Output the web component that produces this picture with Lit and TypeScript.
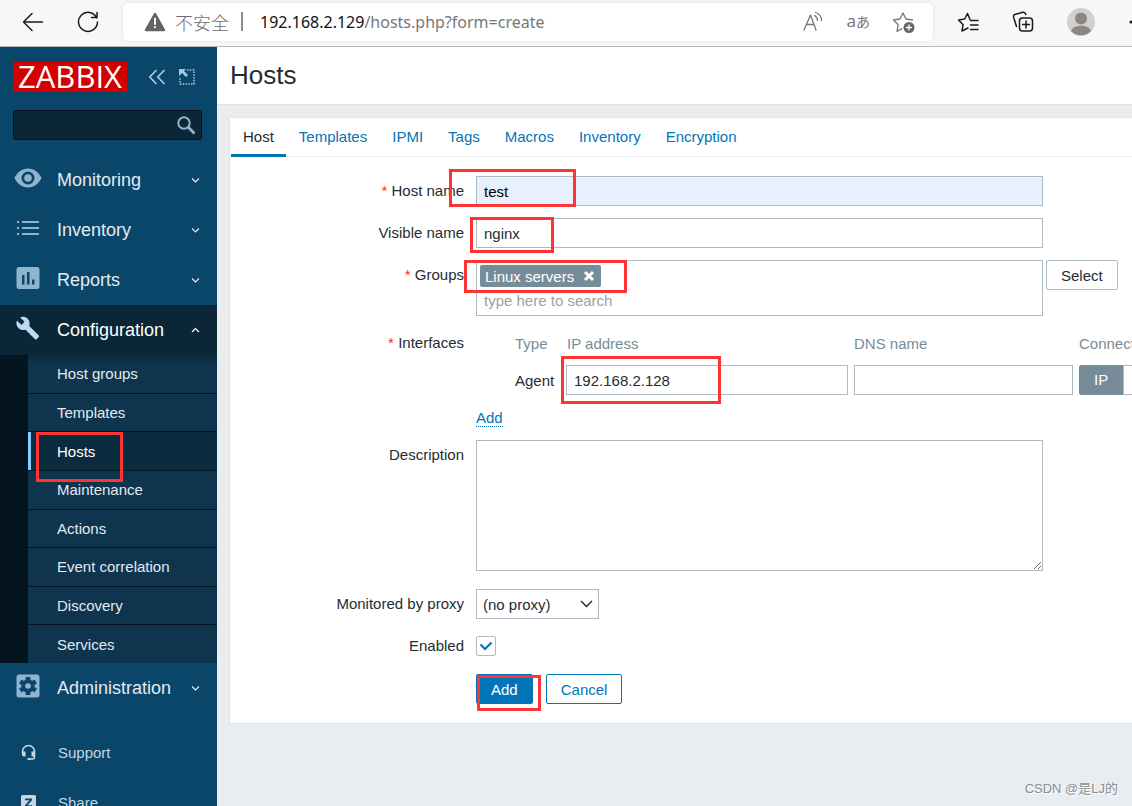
import { LitElement, html, css, svg, nothing, type TemplateResult } from "lit";
import { customElement, property, state } from "lit/decorators.js";
import { classMap } from "lit/directives/class-map.js";

/* ---------- browser toolbar ---------- */

@customElement("browser-bar")
class BrowserBar extends LitElement {
  static styles = css`
    :host {
      display: flex;
      align-items: center;
      box-sizing: border-box;
      height: 47px;
      padding: 0 0 3px 22px;
      background: #f7f7f7;
      border-bottom: 1px solid #b9b9b9;
      overflow: hidden;
      color: #1b1b1b;
    }
    button {
      display: flex;
      flex: none;
      padding: 0;
      border: 0;
      background: none;
      color: inherit;
    }
    svg {
      display: block;
      fill: none;
      stroke: currentColor;
      stroke-width: 1.5;
      stroke-linecap: round;
      stroke-linejoin: round;
    }
    .nav {
      display: flex;
      gap: 33px;
      margin-right: 24px;
    }
    .address {
      display: flex;
      flex: 1;
      align-items: center;
      height: 38px;
      padding: 0 17px 0 21px;
      box-sizing: border-box;
      background: #fff;
      border-radius: 5px;
      box-shadow: 0 0 4px #e2e2e2;
      color: #6c6c6c;
      white-space: nowrap;
    }
    .unsafe {
      margin-left: 9px;
      font: 18px/24px "Noto Sans CJK SC", sans-serif;
      font-weight: 300;
    }
    .divider {
      width: 2px;
      height: 19px;
      margin: 0 17px 0 12px;
      background: #8d8d8d;
    }
    .url {
      flex: 1;
      font: 16px/24px "Noto Sans", sans-serif;
      color: #777;
    }
    .origin {
      color: #111;
    }
    .tools {
      display: flex;
      align-items: center;
      gap: 22px;
      color: #777;
    }
    .translate {
      align-items: baseline;
      font: 17px/22px "Noto Sans", "Noto Sans CJK JP", sans-serif;
    }
    .kana {
      font-size: 14px;
    }
    .side {
      display: flex;
      flex: none;
      align-items: center;
      gap: 32px;
      width: 175px;
      margin-left: 24px;
    }
  `;

  render() {
    return html`
      <div class="nav">
        <button aria-label="Back">
          <svg width="22" height="22" viewBox="0 0 22 22"><path d="M10 2.5 1.5 11l8.500 8.500M1.500 11H20.500" /></svg>
        </button>
        <button aria-label="Reload">
          <svg width="22" height="22" viewBox="0 0 22 22"><path d="M19.700 7A9.500 9.500 0 1 0 20.500 11M14.500 6.500h5.500V1.500" /></svg>
        </button>
      </div>
      <div class="address">
        <svg width="22" height="20" viewBox="0 0 22 20">
          <path d="M11 2 20 18H2Z" fill="#636363" stroke="#636363" stroke-width="2.500" />
          <path d="M11 6.500v5.500M11 15v.3" stroke="#fff" stroke-width="2" />
        </svg>
        <span class="unsafe">不安全</span>
        <span class="divider"></span>
        <span class="url"><span class="origin">192.168.2.129</span>/hosts.php?form=create</span>
        <div class="tools">
          <button aria-label="Read aloud">
            <svg width="22" height="22" viewBox="0 0 22 22"><path d="M2 19 8.500 4 14 19M4.500 13.500h7.500M12.500 4.500c2 1 3 3 3 5M13.500 1.500c4 1.200 6 4.500 6 8" stroke-width="1.300" /></svg>
          </button>
          <button class="translate" aria-label="Translate">a<span class="kana">あ</span></button>
          <button aria-label="Add to favourites">
            <svg width="24" height="22" viewBox="0 0 24 22">
              <path d="m11 2 3 6 6.500 1M11 2 8 8 1.500 9l4.700 4.700L5 20.300l5-2.600" stroke-width="1.300" />
              <circle cx="17" cy="16.500" r="5.500" fill="#666" stroke="none" />
              <path d="M14.500 16.500h5M17 14v5" stroke="#fff" stroke-width="1.300" />
            </svg>
          </button>
        </div>
      </div>
      <div class="side">
        <button aria-label="Favourites">
          <svg width="23" height="22" viewBox="0 0 23 22"><path d="M13 8.500 10.500 2.500 7.700 8 1.500 9l4.600 4.700L5 20l6-3M13.500 9.500h7.500M13.500 14h7.500M13.500 18.500h7.500" /></svg>
        </button>
        <button aria-label="Collections">
          <svg width="23" height="22" viewBox="0 0 23 22">
            <path d="M4.500 15.500 1.700 6.500Q1 4 3.500 3.300l7-2Q13 .7 13.800 3.500" />
            <rect x="7.500" y="7" width="13" height="13" rx="3" />
            <path d="M14 10v7M10.500 13.500h7" />
          </svg>
        </button>
        <button aria-label="Profile">
          <svg width="28" height="28" viewBox="0 0 28 28">
            <circle cx="14" cy="14" r="14" fill="#d2d0cd" stroke="none" />
            <circle cx="14" cy="10.500" r="6" fill="#8b8683" stroke="none" />
            <path d="M4 23c2-7 18-7 20 0a14 14 0 0 1-20 0Z" fill="#8b8683" stroke="none" />
          </svg>
        </button>
        <button aria-label="More">
          <svg width="20" height="4" viewBox="0 0 20 4"><path d="M4 2h.1M11 2h.1M18 2h.1" stroke-width="3" /></svg>
        </button>
      </div>
    `;
  }
}

/* ---------- sidebar ---------- */

const icons: Record<string, TemplateResult> = {
  eye: svg`<path fill-rule="evenodd" d="M14 4.500C8 4.500 3 8.400.5 14 3 19.600 8 23.500 14 23.500S25 19.600 27.500 14C25 8.400 20 4.500 14 4.500Zm0 3a6.500 6.500 0 1 1 0 13 6.500 6.500 0 0 1 0-13Zm0 2.700a3.800 3.800 0 1 0 0 7.600 3.800 3.800 0 0 0 0-7.600Z"/>`,
  list: svg`<path d="M3 7h2v2H3zM3 13h2v2H3zM3 19h2v2H3zM8 7h17v2H8zM8 13h17v2H8zM8 19h17v2H8z"/>`,
  chart: svg`<path fill-rule="evenodd" d="M5 3h18a2.500 2.500 0 0 1 2.500 2.500v17A2.500 2.500 0 0 1 23 25H5a2.500 2.500 0 0 1-2.500-2.500v-17A2.500 2.500 0 0 1 5 3Zm3 8v9.500h2.500V11ZM13 8v12.500h2.500V8ZM18 15.500v5h2.500v-5Z"/>`,
  wrench: svg`<path d="M25 22.500 14.800 12.300c1-2.600.4-5.600-1.700-7.700C10.900 2.400 7.600 2 5 3.200l4.700 4.700-3.300 3.300-4.800-4.700C.4 9.100.9 12.400 3.100 14.600c2.100 2.100 5.100 2.700 7.700 1.700L21 26.500c.5.500 1.200.5 1.600 0l2.400-2.400c.5-.4.5-1.200 0-1.600Z" transform="translate(1.500 .5) scale(.93)"/>`,
  gear: svg`<path d="M5 2.500h18A2.500 2.500 0 0 1 25.500 5v18a2.500 2.500 0 0 1-2.500 2.500H5A2.500 2.500 0 0 1 2.500 23V5A2.500 2.500 0 0 1 5 2.500Z"/><g fill="#0a466a"><path d="M11.700 5h4.600v18h-4.600z"/><path d="M11.700 5h4.600v18h-4.600z" transform="rotate(60 14 14)"/><path d="M11.700 5h4.600v18h-4.600z" transform="rotate(120 14 14)"/><circle cx="14" cy="14" r="6.700"/></g><circle cx="14" cy="14" r="2.800"/>`,
};

const menu = [
  { label: "Monitoring", icon: "eye" },
  { label: "Inventory", icon: "list" },
  { label: "Reports", icon: "chart" },
  {
    label: "Configuration",
    icon: "wrench",
    items: ["Host groups", "Templates", "Hosts", "Maintenance", "Actions", "Event correlation", "Discovery", "Services"],
  },
  { label: "Administration", icon: "gear" },
];

@customElement("side-bar")
class SideBar extends LitElement {
  static styles = css`
    :host {
      display: block;
      flex: none;
      width: 217px;
      background: #0a466a;
      font-size: 15px;
      overflow: hidden;
    }
    svg {
      display: block;
      flex: none;
    }
    button {
      padding: 0;
      border: 0;
      background: none;
      color: #a9c9de;
    }
    a {
      color: inherit;
      text-decoration: none;
    }
    .top {
      display: flex;
      align-items: center;
      padding: 15px 22px 0 13px;
    }
    .logo {
      width: 114px;
      height: 30px;
      margin-right: 21px;
      background: #d40000;
      color: #fff;
      font: 31px/29px "Open Sans", sans-serif;
      text-align: center;
    }
    .kiosk {
      margin-left: 12px;
    }
    .search {
      display: flex;
      align-items: center;
      height: 30px;
      margin: 18px 15px 15px 13px;
      box-sizing: border-box;
      padding-right: 5px;
      background: #0a2637;
      border: 1px solid #04131c;
      border-radius: 3px;
    }
    .search input {
      flex: 1;
      min-width: 0;
      border: 0;
      outline: 0;
      background: none;
      color: #fff;
      font: inherit;
    }
    .item {
      display: flex;
      align-items: center;
      height: 50px;
      padding: 0 16px 0 14px;
      color: #e2ebf1;
      font-size: 18px;
    }
    .item > svg:first-child {
      margin: 0 15px 4px 0;
      fill: #8fb4cd;
    }
    .name {
      flex: 1;
    }
    .open {
      background: #0a2637;
      color: #fff;
    }
    .open > svg:first-child {
      fill: #b9dcf4;
    }
    .chevron {
      fill: none;
      stroke: currentColor;
      stroke-width: 1.200;
    }
    .sub {
      display: grid;
      grid-template-rows: repeat(8, 1fr);
      gap: 1px;
      height: 308px;
      padding-left: 28px;
      background: #04151f;
    }
    .sub a {
      display: flex;
      align-items: center;
      padding-left: 26px;
      border-left: 3px solid #0f344d;
      background: #0f344d;
      color: #e2ebf1;
    }
    .sub a:first-child {
      border-left-width: 0;
      padding-left: 29px;
      background: linear-gradient(#0b2a3d, #0f344d 10px);
    }
    .sub a.current {
      background: #0b2b3e;
      border-left-color: #86ccff;
      color: #fff;
    }
    .foot {
      padding-top: 14px;
      color: #c4d6e2;
    }
    .foot a {
      display: flex;
      align-items: center;
      gap: 21px;
      height: 50px;
      padding-left: 20px;
    }
  `;

  render() {
    return html`
      <div class="top">
        <a class="logo" href="#">ZABBIX</a>
        <button aria-label="Collapse sidebar">
          <svg width="19" height="18" viewBox="0 0 19 18" fill="none" stroke="currentColor" stroke-width="1.700"><path d="M8.500 2 1.800 9l6.700 7M16.500 2 9.800 9l6.700 7" /></svg>
        </button>
        <button class="kiosk" aria-label="Hide menu">
          <svg width="16" height="16" viewBox="0 0 16 16">
            <path d="M0 0h7L5 2l4 4-2 2-4-4-3 3Z" fill="currentColor" />
            <path d="M8 1h7v14H1V9" fill="none" stroke="currentColor" stroke-width="1.500" stroke-dasharray="1.500 1.300" />
          </svg>
        </button>
      </div>
      <form class="search" role="search">
        <input type="text" aria-label="Search" />
        <button type="button" aria-label="Search">
          <svg width="20" height="20" viewBox="0 0 20 20" fill="none" stroke="#8fb4cd"><circle cx="8" cy="8" r="5.700" stroke-width="2" /><path d="m12 12 6.500 6.500" stroke-width="2.800" /></svg>
        </button>
      </form>
      <nav>
        ${menu.map(
          (m) => html`
            <a href="#" class=${classMap({ item: true, open: !!m.items })}>
              <svg width="28" height="28" viewBox="0 0 28 28">${icons[m.icon]}</svg>
              <span class="name">${m.label}</span>
              <svg class="chevron" width="11" height="8" viewBox="0 0 11 8"><path d=${m.items ? "M2 6 5.500 2.500 9 6" : "M2 2.500 5.500 6 9 2.500"} /></svg>
            </a>
            ${m.items
              ? html`<div class="sub">
                  ${m.items.map((i) => html`<a href="#" class=${classMap({ current: i === "Hosts" })}>${i}</a>`)}
                </div>`
              : nothing}
          `
        )}
      </nav>
      <div class="foot">
        <a href="#">
          <svg width="17" height="17" viewBox="0 0 17 17">
            <path d="M2.500 9V7.500a6 6 0 0 1 12 0V13q0 2-2 2H9" fill="none" stroke="currentColor" stroke-width="1.600" />
            <path d="M2 7.500h3.500v5H4q-2 0-2-2ZM11.500 7.500H15v5h-3.500zM7.500 14h3v2h-3z" fill="currentColor" />
          </svg>
          Support
        </a>
        <a href="#">
          <svg width="17" height="17" viewBox="0 0 17 17">
            <rect x="1" y="1" width="15" height="15" rx="1.500" fill="currentColor" />
            <path d="M5 4.500h7v1.700L7.500 11.300H12V13H5v-1.700l4.500-5.100H5Z" fill="#0a466a" />
          </svg>
          Share
        </a>
      </div>
    `;
  }
}

/* ---------- host form ---------- */

@customElement("host-form")
class HostForm extends LitElement {
  static styles = css`
    :host {
      display: block;
      background: #fff;
      border: 1px solid #dfe4e7;
      color: #1f2c33;
      font-size: 15px;
    }
    input,
    select,
    textarea,
    button {
      box-sizing: border-box;
      margin: 0;
      font: inherit;
      color: inherit;
    }
    a {
      color: #0275b8;
      text-decoration: none;
    }
    .tabs {
      display: flex;
      gap: 1px;
      padding-left: 1px;
      border-bottom: 1px solid #ebeef0;
    }
    .tabs a {
      padding: 1px 12px 0;
      line-height: 35px;
      border-bottom: 3px solid transparent;
      margin-bottom: -1px;
    }
    .tabs a.active {
      border-color: #0275b8;
      color: #1f2c33;
    }
    .rows {
      display: flex;
      flex-direction: column;
      gap: 12px;
      padding: 19px 0;
    }
    .row {
      display: grid;
      grid-template-columns: 234px 1fr;
      column-gap: 12px;
    }
    .label {
      text-align: right;
      line-height: 30px;
    }
    .required::before {
      content: "* ";
      color: #e33734;
    }
    .text {
      display: block;
      width: 100%;
      height: 30px;
      padding: 0 7px;
      border: 1px solid #acbbc2;
      border-radius: 0;
      outline: 0;
      background: #fff;
    }
    .wide {
      width: 567px;
    }
    .filled {
      background: #e8f0fe;
      color: #000;
    }
    .groups {
      display: flex;
      align-items: flex-start;
      gap: 3px;
    }
    .multi {
      flex: none;
      box-sizing: border-box;
      height: 56px;
      padding: 4px 3px 3px;
      border: 1px solid #acbbc2;
    }
    .tag {
      display: flex;
      align-items: center;
      gap: 9px;
      width: fit-content;
      height: 22px;
      padding: 0 6px 0 5px;
      border-radius: 2px;
      background: #768d99;
      color: #fff;
    }
    .tag button {
      padding: 0;
      border: 0;
      background: none;
    }
    .tag svg {
      display: block;
    }
    .multi input {
      display: block;
      width: 100%;
      height: 26px;
      padding: 0 4px;
      border: 0;
      outline: 0;
      background: none;
    }
    .multi input::placeholder {
      color: #a0a0a0;
      opacity: 1;
    }
    .btn {
      height: 30px;
      padding: 0 14px;
      border: 1px solid #0275b8;
      border-radius: 2px;
      background: #fff;
      color: #0275b8;
    }
    .grey {
      border-color: #acbbc2;
      color: #1f2c33;
    }
    .primary {
      background: #0275b8;
      color: #fff;
    }
    .buttons {
      display: flex;
      gap: 13px;
      padding-top: 1px;
    }
    .interfaces {
      padding-bottom: 1px;
    }
    table {
      width: 700px;
      margin: 0 0 14px 39px;
      table-layout: fixed;
      border-collapse: collapse;
    }
    th,
    td {
      padding: 0 6px 0 0;
      text-align: left;
      font-weight: normal;
    }
    th {
      height: 31px;
      padding-bottom: 6px;
      color: #768d99;
    }
    th.ip {
      padding-left: 1px;
    }
    .type {
      width: 45px;
    }
    .ip {
      width: 281px;
    }
    .dns {
      width: 219px;
    }
    .toggle {
      display: flex;
      height: 30px;
      line-height: 28px;
    }
    .toggle label {
      padding: 0 14px;
      border: 1px solid #acbbc2;
      border-radius: 0 2px 2px 0;
    }
    .toggle label.on {
      border-color: #768d99;
      border-radius: 2px 0 0 2px;
      background: #768d99;
      color: #fff;
    }
    .toggle input {
      position: absolute;
      opacity: 0;
    }
    .add {
      display: block;
      width: fit-content;
      line-height: 17px;
      border-bottom: 1px dotted #0275b8;
    }
    textarea.text {
      height: 131px;
      margin-bottom: 6px;
      resize: both;
    }
    .proxy {
      width: 123px;
      height: 30px;
      padding: 0 6px;
      border: 1px solid #acbbc2;
      border-radius: 0;
      appearance: none;
      background: #fff url("data:image/svg+xml,%3Csvg xmlns='http://www.w3.org/2000/svg' width='13' height='8'%3E%3Cpath d='M1 1l5.500 5.500L12 1' fill='none' stroke='%23222' stroke-width='1.400'/%3E%3C/svg%3E") no-repeat right 5px center;
    }
    .check {
      align-self: center;
      width: 20px;
      height: 20px;
      border: 1px solid #acbbc2;
      border-radius: 2px;
      appearance: none;
    }
    .check:checked {
      background: url("data:image/svg+xml,%3Csvg xmlns='http://www.w3.org/2000/svg' width='14' height='10'%3E%3Cpath d='M1.500 3.500l4.500 4.500 6.500-6.500' fill='none' stroke='%230275b8' stroke-width='2.200'/%3E%3C/svg%3E") no-repeat center;
    }
  `;

  @property({ type: Array }) tabs = ["Host", "Templates", "IPMI", "Tags", "Macros", "Inventory", "Encryption"];
  @state() private active = "Host";

  render() {
    return html`
      <nav class="tabs">
        ${this.tabs.map(
          (t) => html`<a href="#" class=${classMap({ active: t === this.active })} @click=${() => (this.active = t)}>${t}</a>`
        )}
      </nav>
      <form class="rows">
        <div class="row">
          <label class="label required" for="host">Host name</label>
          <input id="host" class="text wide filled" type="text" value="test" />
        </div>
        <div class="row">
          <label class="label" for="visible">Visible name</label>
          <input id="visible" class="text wide" type="text" value="nginx" />
        </div>
        <div class="row">
          <label class="label required" for="groups">Groups</label>
          <div class="groups">
            <div class="multi wide">
              <span class="tag">
                Linux servers
                <button type="button" aria-label="Remove Linux servers">
                  <svg width="12" height="12" viewBox="0 0 12 12"><path d="m2 2 8 8M10 2l-8 8" stroke="#fff" stroke-width="3" /></svg>
                </button>
              </span>
              <input id="groups" type="text" placeholder="type here to search" />
            </div>
            <button type="button" class="btn grey">Select</button>
          </div>
        </div>
        <div class="row">
          <span class="label required">Interfaces</span>
          <div class="interfaces">
            <table>
              <thead>
                <tr>
                  <th class="type">Type</th>
                  <th class="ip">IP address</th>
                  <th class="dns">DNS name</th>
                  <th>Connect to</th>
                </tr>
              </thead>
              <tbody>
                <tr>
                  <td>Agent</td>
                  <td><input class="text" type="text" aria-label="IP address" value="192.168.2.128" /></td>
                  <td><input class="text" type="text" aria-label="DNS name" /></td>
                  <td>
                    <div class="toggle">
                      <label class="on"><input type="radio" name="connect" checked />IP</label>
                      <label><input type="radio" name="connect" />DNS</label>
                    </div>
                  </td>
                </tr>
              </tbody>
            </table>
            <a class="add" href="#">Add</a>
          </div>
        </div>
        <div class="row">
          <label class="label" for="description">Description</label>
          <textarea id="description" class="text wide"></textarea>
        </div>
        <div class="row">
          <label class="label" for="proxy">Monitored by proxy</label>
          <select id="proxy" class="proxy">
            <option>(no proxy)</option>
          </select>
        </div>
        <div class="row">
          <label class="label" for="enabled">Enabled</label>
          <input id="enabled" class="check" type="checkbox" checked />
        </div>
        <div class="row">
          <span></span>
          <div class="buttons">
            <button type="button" class="btn primary">Add</button>
            <button type="button" class="btn">Cancel</button>
          </div>
        </div>
      </form>
    `;
  }
}

/* ---------- page ---------- */

@customElement("app-root")
class AppRoot extends LitElement {
  static styles = css`
    :host {
      display: flex;
      flex-direction: column;
      position: relative;
      height: 100vh;
      overflow: hidden;
      font-family: "Liberation Sans", Arial, sans-serif;
      font-size: 15px;
    }
    browser-bar {
      flex: none;
    }
    .body {
      display: flex;
      flex: 1;
      min-height: 0;
    }
    main {
      flex: 1;
      min-width: 0;
      overflow: hidden;
      background: #e9edf0;
    }
    h1 {
      margin: 0;
      padding: 0 13px;
      border-bottom: 1px solid #dfe4e7;
      background: #fff;
      color: #1f2c33;
      font-size: 26px;
      font-weight: normal;
      line-height: 57px;
    }
    .card {
      min-width: 930px;
      margin: 12px;
    }
    /* highlight frames over the page */
    .mark {
      position: absolute;
      box-sizing: border-box;
      border: 3px solid #fd3434;
      pointer-events: none;
    }
    .m-host { left: 449px; top: 169px; width: 127px; height: 38px; }
    .m-visible { left: 470px; top: 217px; width: 84px; height: 36px; }
    .m-groups { left: 464px; top: 260px; width: 163px; height: 33px; }
    .m-ip { left: 561px; top: 356px; width: 160px; height: 48px; }
    .m-menu { left: 36px; top: 432px; width: 87px; height: 50px; }
    .m-add { left: 477px; top: 675px; width: 64px; height: 36px; }
    .watermark {
      position: absolute;
      right: 14px;
      bottom: 7px;
      color: #8a8d8f;
      font: 13px/20px "Liberation Sans", "Noto Sans CJK SC", sans-serif;
      text-shadow: 1px 1px 0 #fff;
    }
  `;

  private marks = ["m-host", "m-visible", "m-groups", "m-ip", "m-menu", "m-add"];

  render() {
    return html`
      <browser-bar></browser-bar>
      <div class="body">
        <side-bar></side-bar>
        <main>
          <h1>Hosts</h1>
          <host-form class="card"></host-form>
        </main>
      </div>
      ${this.marks.map((m) => html`<div class="mark ${m}"></div>`)}
      <span class="watermark">CSDN @是LJ的</span>
    `;
  }
}
